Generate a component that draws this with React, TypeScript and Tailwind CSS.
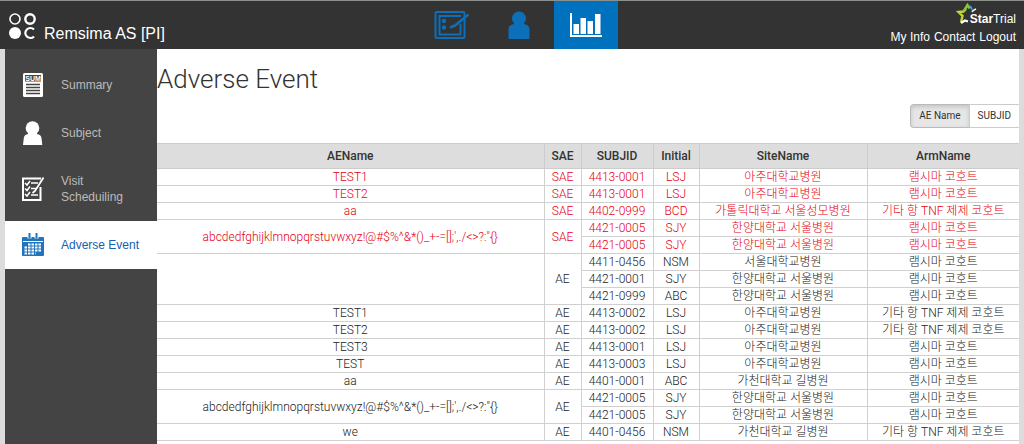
import { useState } from "react";
import clsx from "clsx";

type Visit = { subjId: string; initial: string; site: string; arm: string };
type EventGroup = { name: string; type: "SAE" | "AE"; visits: Visit[] };

const AJOU = "아주대학교병원";
const HANYANG = "한양대학교 서울병원";
const GACHON = "가천대학교 길병원";
const REMSIMA = "램시마 코호트";
const OTHER_TNF = "기타 항 TNF 제제 코호트";
const LONG_NAME = "abcdedfghijklmnopqrstuvwxyz!@#$%^&*()_+-=[];',./<>?:\"{}";

const EVENTS: EventGroup[] = [
    { name: "TEST1", type: "SAE", visits: [{ subjId: "4413-0001", initial: "LSJ", site: AJOU, arm: REMSIMA }] },
    { name: "TEST2", type: "SAE", visits: [{ subjId: "4413-0001", initial: "LSJ", site: AJOU, arm: REMSIMA }] },
    { name: "aa", type: "SAE", visits: [{ subjId: "4402-0999", initial: "BCD", site: "가톨릭대학교 서울성모병원", arm: OTHER_TNF }] },
    {
        name: LONG_NAME,
        type: "SAE",
        visits: [
            { subjId: "4421-0005", initial: "SJY", site: HANYANG, arm: REMSIMA },
            { subjId: "4421-0005", initial: "SJY", site: HANYANG, arm: REMSIMA },
        ],
    },
    {
        name: "",
        type: "AE",
        visits: [
            { subjId: "4411-0456", initial: "NSM", site: "서울대학교병원", arm: REMSIMA },
            { subjId: "4421-0001", initial: "SJY", site: HANYANG, arm: REMSIMA },
            { subjId: "4421-0999", initial: "ABC", site: HANYANG, arm: REMSIMA },
        ],
    },
    { name: "TEST1", type: "AE", visits: [{ subjId: "4413-0002", initial: "LSJ", site: AJOU, arm: OTHER_TNF }] },
    { name: "TEST2", type: "AE", visits: [{ subjId: "4413-0002", initial: "LSJ", site: AJOU, arm: OTHER_TNF }] },
    { name: "TEST3", type: "AE", visits: [{ subjId: "4413-0001", initial: "LSJ", site: AJOU, arm: REMSIMA }] },
    { name: "TEST", type: "AE", visits: [{ subjId: "4413-0003", initial: "LSJ", site: AJOU, arm: REMSIMA }] },
    { name: "aa", type: "AE", visits: [{ subjId: "4401-0001", initial: "ABC", site: GACHON, arm: REMSIMA }] },
    {
        name: LONG_NAME,
        type: "AE",
        visits: [
            { subjId: "4421-0005", initial: "SJY", site: HANYANG, arm: REMSIMA },
            { subjId: "4421-0005", initial: "SJY", site: HANYANG, arm: REMSIMA },
        ],
    },
    { name: "we", type: "AE", visits: [{ subjId: "4401-0456", initial: "NSM", site: GACHON, arm: OTHER_TNF }] },
];

const COLUMNS = [
    { label: "AEName", width: "" },
    { label: "SAE", width: "w-[37px]" },
    { label: "SUBJID", width: "w-[72px]" },
    { label: "Initial", width: "w-[46px]" },
    { label: "SiteName", width: "w-[168px]" },
    { label: "ArmName", width: "w-[152px]" },
];

function BrandMark() {
    return (
        <svg width="28" height="28" viewBox="0 0 28 28" fill="none" stroke="#fff">
            <circle cx="7" cy="7" r="5" strokeWidth="1.6" />
            <circle cx="22" cy="7" r="4.7" strokeWidth="2.4" />
            <circle cx="7" cy="21" r="6" fill="#fff" stroke="none" />
            <path d="M26 17.6a5 5 0 1 0 0 6.8" strokeWidth="2.2" />
        </svg>
    );
}

function FormIcon() {
    return (
        <svg width="36" height="30" viewBox="0 0 36 30" fill="none" stroke="#0d6fb8">
            <rect x="1.5" y="2" width="29" height="26" rx="1" strokeWidth="2" />
            <path d="M27 6H5.500v18.500H26.500V14" strokeWidth="2" />
            <circle cx="10" cy="11" r="2.200" fill="#0d6fb8" stroke="none" />
            <circle cx="10" cy="17.500" r="2.200" fill="#0d6fb8" stroke="none" />
            <path d="M16 17.500l5-2L34.500 4.500" strokeWidth="2.600" />
        </svg>
    );
}

function PersonIcon() {
    return (
        <svg width="22" height="28" viewBox="0 0 22 28" fill="#0d6fb8">
            <circle cx="11" cy="7.500" r="7" />
            <path d="M6 11h10v2q5.500 1 5.500 5v10H.5V18q0-4 5.500-5z" />
        </svg>
    );
}

function ChartIcon() {
    return (
        <svg width="32" height="26" viewBox="0 0 32 26" fill="#fff">
            <path d="M0 1h2v22h30v2H0zM3.500 12H9v10H3.500zM10.500 6H16v16h-5.500zM17.500 9H23v13h-5.500zM25 2h5.500v20H25z" />
        </svg>
    );
}

function StarLogo() {
    return (
        <svg width="22" height="22" viewBox="0 0 22 22" fill="none">
            <path d="M10 6L7.500 8.500 2.500 9l4 4-1.500 6.500" stroke="#c3d82f" strokeWidth="2.400" />
            <path d="M7.500 8.500L11.500 2l2 3.500" stroke="#8cc63f" strokeWidth="2.400" />
            <path d="M12 2q5 0 4.500 6l-2-2.500z" fill="#35a8d8" />
            <path d="M5 20l4-2.500 3 1" stroke="#fff" strokeWidth="2.200" />
            <path d="M16 9q1-2 4-3" stroke="#fff" strokeWidth="1.600" />
        </svg>
    );
}

function SummaryIcon() {
    return (
        <svg width="22" height="26" viewBox="0 0 22 26">
            <rect x="1" y="1" width="20" height="24" rx="1.500" fill="#fff" />
            <rect x="3" y="3" width="16" height="6.500" fill="#444" />
            <text x="11" y="9" textAnchor="middle" fontSize="7" fontWeight="700" fontFamily="Liberation Sans, sans-serif" fill="#fff">SUM</text>
            <path d="M4 12.500h14M4 15.500h14M4 18.500h14M4 21.500h14" stroke="#444" strokeWidth="1.300" />
        </svg>
    );
}

function SubjectIcon() {
    return (
        <svg width="22" height="26" viewBox="0 0 22 26" fill="#fff">
            <circle cx="10.500" cy="8" r="6.800" />
            <path d="M6 12h9v2q4 .5 4.500 4l.8 7H1l.8-7q.5-3.500 4.200-4z" />
        </svg>
    );
}

function VisitIcon() {
    return (
        <svg width="22" height="26" viewBox="0 0 22 26" fill="none" stroke="#fff">
            <path d="M19 2.500H1V24h17.500V11" strokeWidth="2" />
            <path d="M3 7l2 2 3-4M3 12.500l2 2 3-4M3 18l2 2 3-4" strokeWidth="1.500" />
            <path d="M9 7h7M9 12.500h5M9 19h7" strokeWidth="1.600" />
            <path d="M21.500 1.500L13 15l-2.500 2" strokeWidth="1.800" />
        </svg>
    );
}

function CalendarIcon() {
    return (
        <svg width="22" height="26" viewBox="0 0 22 26">
            <path d="M0 6q0-1 1-1h20q1 0 1 1v17q0 1-1 1H1q-1 0-1-1z" fill="#1f74bd" />
            <path d="M7.500 6.500V3M14.500 6.500V3" stroke="#fff" strokeWidth="4" />
            <path d="M7.500 6.500V1M14.500 6.500V1" stroke="#1f74bd" strokeWidth="2" />
            <path d="M1 9.500h20" stroke="#fff" strokeWidth="1" />
            <path d="M6 12.500h13M2.500 15.500h16.500M2.500 18.500h16.500M2.500 21.500h11" stroke="#fff" strokeWidth="2" strokeDasharray="2.500 1" />
        </svg>
    );
}

const TOP_NAV = [
    { label: "Forms", Icon: FormIcon, active: false },
    { label: "Subjects", Icon: PersonIcon, active: false },
    { label: "Reports", Icon: ChartIcon, active: true },
];

const SIDE_NAV = [
    { label: "Summary", Icon: SummaryIcon, height: "h-12", active: false },
    { label: "Subject", Icon: SubjectIcon, height: "h-12", active: false },
    { label: "Visit Scheduiling", Icon: VisitIcon, height: "h-16", active: false },
    { label: "Adverse Event", Icon: CalendarIcon, height: "h-12", active: true },
];

export default function App() {
    const [groupBy, setGroupBy] = useState("AE Name");

    return (
        <div className="flex min-h-screen flex-col bg-[#dcdcdc] font-['Liberation_Sans','Noto_Sans_CJK_KR',sans-serif] text-xs text-[#333]">
            {/* Header */}
            <header className="flex h-[49px] border-t border-[#8b908d] bg-[#333] text-white">
                <div className="flex w-[41%] items-start gap-2 pl-2 pt-[11px]">
                    <BrandMark />
                    <h1 className="pt-3 text-base leading-5">Remsima AS [PI]</h1>
                </div>
                <nav className="flex gap-[3px]">
                    {TOP_NAV.map(({ label, Icon, active }) => (
                        <a
                            key={label}
                            href="#"
                            aria-label={label}
                            className={clsx("flex w-16 items-center justify-center", active && "bg-[#0071bc]")}
                        >
                            <Icon />
                        </a>
                    ))}
                </nav>
                <div className="ml-auto flex flex-col items-end pr-2">
                    <div className="flex items-end pt-0.5">
                        <StarLogo />
                        <span className="-ml-2 text-xs leading-3">
                            <b>Star</b>Trial
                        </span>
                    </div>
                    <div className="flex gap-1 pt-1 leading-4">
                        <a href="#">My Info</a>
                        <a href="#">Contact</a>
                        <a href="#">Logout</a>
                    </div>
                </div>
            </header>

            <div className="flex flex-1 px-[5px]">
                {/* Sidebar */}
                <nav className="w-[152px] shrink-0 bg-[#444] pt-3">
                    {SIDE_NAV.map(({ label, Icon, height, active }) => (
                        <a
                            key={label}
                            href="#"
                            className={clsx(
                                "flex items-center gap-[17px] pl-[17px] pr-3 leading-4",
                                height,
                                active ? "bg-white text-[#1560b0]" : "text-[#bbb]"
                            )}
                        >
                            <span className="shrink-0">
                                <Icon />
                            </span>
                            {label}
                        </a>
                    ))}
                </nav>

                {/* Content */}
                <main className="min-w-0 flex-1 bg-white font-['Roboto','Noto_Sans_CJK_KR',sans-serif]">
                    <h2 className="pt-3 text-[26px] font-light leading-9">Adverse Event</h2>
                    <div className="mt-[7px] flex justify-end text-[10px]">
                        {["AE Name", "SUBJID"].map((option) => (
                            <button
                                key={option}
                                type="button"
                                aria-pressed={groupBy === option}
                                onClick={() => setGroupBy(option)}
                                className={clsx(
                                    "h-6 border border-r-0 px-2 first:rounded-l-sm",
                                    groupBy === option
                                        ? "border-[#bbb] bg-[#e6e6e6] shadow-[inset_0_2px_4px_rgba(0,0,0,0.15)]"
                                        : "border-[#ccc] bg-white"
                                )}
                            >
                                {option}
                            </button>
                        ))}
                    </div>

                    <table className="mt-[15px] w-full table-fixed border-collapse text-center leading-4">
                        <thead>
                            <tr className="h-[25px] bg-[#ddd]">
                                {COLUMNS.map((col) => (
                                    <th key={col.label} className={clsx("border border-[#ccc] p-0 font-medium first:border-l-0 last:border-r-0", col.width)}>
                                        {col.label}
                                    </th>
                                ))}
                            </tr>
                        </thead>
                        <tbody className="font-light">
                            {EVENTS.map((group, g) =>
                                group.visits.map((visit, v) => (
                                    <tr key={`${g}-${v}`} className={clsx("h-[17px]", group.type === "SAE" ? "text-[#e60012]" : "text-[#222]")}>
                                        {v === 0 && (
                                            <>
                                                <td rowSpan={group.visits.length} className="border border-l-0 border-[#d0d0d0] p-0">
                                                    {group.name}
                                                </td>
                                                <td rowSpan={group.visits.length} className="border border-[#d0d0d0] p-0">
                                                    {group.type}
                                                </td>
                                            </>
                                        )}
                                        <td className="border border-[#d0d0d0] p-0">{visit.subjId}</td>
                                        <td className="border border-[#d0d0d0] p-0">{visit.initial}</td>
                                        <td className="border border-[#d0d0d0] p-0">{visit.site}</td>
                                        <td className="border border-r-0 border-[#d0d0d0] p-0">{visit.arm}</td>
                                    </tr>
                                ))
                            )}
                        </tbody>
                    </table>
                </main>
            </div>
        </div>
    );
}
